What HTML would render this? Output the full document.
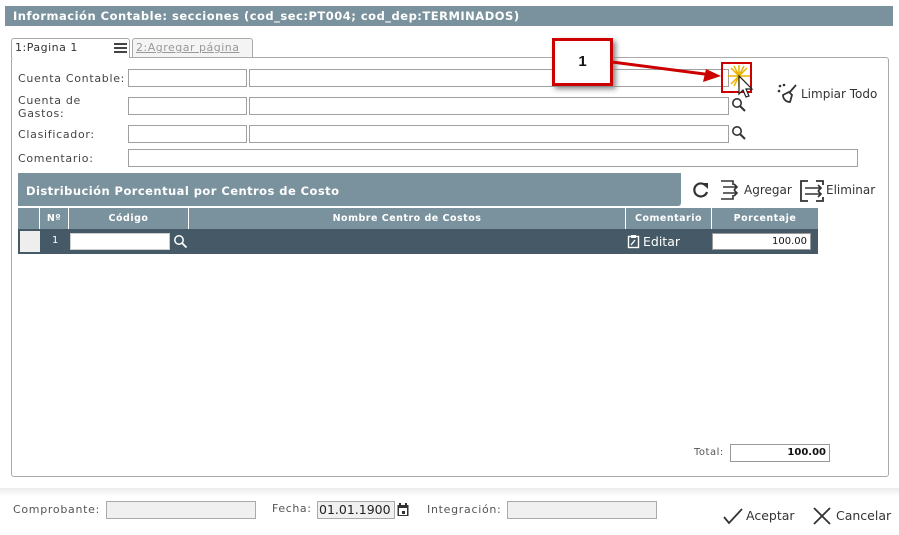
<!DOCTYPE html>
<html><head><meta charset="utf-8"><style>
body{margin:0;width:899px;height:535px;background:#fff;font-family:"Liberation Sans","DejaVu Sans",sans-serif;position:relative;overflow:hidden;color:#333}
.a{position:absolute}
.inp{position:absolute;border:1px solid #a0a0a0;background:#fff;box-sizing:border-box;height:18px}
.lbl{position:absolute;color:#444;font-family:"DejaVu Sans",sans-serif;font-size:11px;letter-spacing:0.7px}
.th{position:absolute;top:208px;height:21px;line-height:21px;background:#7a929d;color:#fff;font-family:"DejaVu Sans",sans-serif;font-weight:bold;font-size:9.5px;letter-spacing:0.5px;text-align:center;border-right:1px solid #fff;box-sizing:border-box}
</style></head><body>
<div class="a" style="left:5px;top:6px;width:888px;height:20px;background:#7a929d;color:#fff;font-family:'DejaVu Sans',sans-serif;font-weight:bold;font-size:11.5px;letter-spacing:0.5px;line-height:21px;padding-left:8px;box-sizing:border-box">Información Contable: secciones (cod_sec:PT004; cod_dep:TERMINADOS)</div>
<div class="a" style="left:11px;top:57px;width:878px;height:420px;border:1px solid #aaa;border-radius:3px;box-sizing:border-box"></div>
<div class="a" style="left:11px;top:38px;width:119px;height:20px;border:1px solid #aaa;border-bottom:none;background:#fff;border-radius:3px 3px 0 0;box-sizing:border-box;font-family:'DejaVu Sans',sans-serif;font-size:11px;letter-spacing:0.5px;line-height:18px;padding-left:3px">1:Pagina 1
<span class="a" style="left:102px;top:4px;width:13px;height:2px;background:#444;box-shadow:0 4px 0 #444,0 8px 0 #444"></span></div>
<div class="a" style="left:132px;top:38px;width:121px;height:19px;border:1px solid #aaa;border-bottom:none;background:#f4f4f4;border-radius:3px 3px 0 0;box-sizing:border-box;font-family:'DejaVu Sans',sans-serif;font-size:11px;letter-spacing:0.5px;line-height:17px;padding-left:3px;color:#999;text-decoration:underline">2:Agregar página</div>

<div class="lbl" style="left:18px;top:72px">Cuenta Contable:</div>
<div class="lbl" style="left:18px;top:94px;line-height:13px">Cuenta de<br>Gastos:</div>
<div class="lbl" style="left:18px;top:128px">Clasificador:</div>
<div class="lbl" style="left:18px;top:152px">Comentario:</div>
<div class="inp" style="left:128px;top:69px;width:119px"></div><div class="inp" style="left:249px;top:69px;width:480px"></div>
<div class="inp" style="left:128px;top:97px;width:119px"></div><div class="inp" style="left:249px;top:97px;width:480px"></div>
<div class="inp" style="left:128px;top:125px;width:119px"></div><div class="inp" style="left:249px;top:125px;width:480px"></div>
<div class="inp" style="left:128px;top:149px;width:730px"></div>
<svg class="a" style="left:731px;top:97px" width="16" height="16"><circle cx="6" cy="6" r="4.2" fill="none" stroke="#333" stroke-width="1.6"/><path d="M9 9l5 5" stroke="#333" stroke-width="2"/></svg>
<svg class="a" style="left:731px;top:125px" width="16" height="16"><circle cx="6" cy="6" r="4.2" fill="none" stroke="#333" stroke-width="1.6"/><path d="M9 9l5 5" stroke="#333" stroke-width="2"/></svg>
<svg class="a" style="left:777px;top:83px" width="22" height="22"><circle cx="3" cy="3" r="1.3" fill="#333"/><circle cx="7" cy="2" r="1.3" fill="#333"/><circle cx="2" cy="8" r="1.3" fill="#333"/><path d="M19 2l-7 8M6 12l6-3 3 3-2 7c-4 0-7-3-7-7z" fill="none" stroke="#333" stroke-width="1.8"/></svg>
<div class="a" style="left:801px;top:87px;font-family:'DejaVu Sans',sans-serif;font-size:12px;color:#333">Limpiar Todo</div>

<div class="a" style="left:552px;top:38px;width:61px;height:48px;border:3px solid #c00;background:#fff;box-sizing:border-box;box-shadow:3px 3px 5px #888;text-align:center;font-weight:bold;font-size:15px;line-height:42px;color:#111">1</div>
<svg class="a" style="left:600px;top:55px" width="130" height="35"><path d="M12 7L112 20" stroke="#c00" stroke-width="3"/><path d="M121 21l-18 6 3-13z" fill="#c00"/></svg>
<div class="a" style="left:721px;top:62px;width:31px;height:31px;border:2px solid #c00;box-sizing:border-box"></div>
<svg class="a" style="left:726px;top:64px" width="34" height="36"><g stroke="#e8b400" stroke-width="1.5"><path d="M2 12h22M13 1v22M5 4l16 16M21 4L5 20M8 2l10 20M18 2L8 22"/></g><path d="M13 12v18l4-4 3 7 3-1-3-7h6z" fill="#fff" stroke="#222" stroke-width="1.2"/></svg>

<div class="a" style="left:18px;top:173px;width:663px;height:33px;background:#7a929d;border-radius:0 0 3px 0;color:#fff;font-family:'DejaVu Sans',sans-serif;font-weight:bold;font-size:11.5px;letter-spacing:0.45px;line-height:36px;padding-left:8px;box-sizing:border-box">Distribución Porcentual por Centros de Costo</div>
<svg class="a" style="left:691px;top:180px" width="20" height="20"><path d="M15 6A6.5 6.5 0 1 0 16 12" fill="none" stroke="#333" stroke-width="2.2"/><path d="M11 3h6v6z" fill="#333"/></svg>
<svg class="a" style="left:718px;top:179px" width="22" height="22"><path d="M3 2h12v4M15 16v4H3" fill="none" stroke="#333" stroke-width="1.6"/><path d="M5 8h14M5 14h14M16 5l3 3-3 3M16 11l3 3-3 3" fill="none" stroke="#333" stroke-width="1.6"/></svg>
<div class="a" style="left:744px;top:183px;font-family:'DejaVu Sans',sans-serif;font-size:12px">Agregar</div>
<svg class="a" style="left:799px;top:179px" width="26" height="24"><path d="M9 2H2v20h7M17 2h7v4M24 18v4h-7" fill="none" stroke="#333" stroke-width="1.8"/><path d="M6 9h16M6 15h16M19 6l3 3-3 3M19 12l3 3-3 3" fill="none" stroke="#333" stroke-width="1.6"/></svg>
<div class="a" style="left:826px;top:183px;font-family:'DejaVu Sans',sans-serif;font-size:12px">Eliminar</div>

<div class="th" style="left:18px;width:22px"></div>
<div class="th" style="left:40px;width:29px">Nº</div>
<div class="th" style="left:69px;width:120px">Código</div>
<div class="th" style="left:189px;width:437px">Nombre Centro de Costos</div>
<div class="th" style="left:626px;width:86px">Comentario</div>
<div class="th" style="left:712px;width:106px;border-right:none">Porcentaje</div>
<div class="a" style="left:18px;top:229px;width:800px;height:25px;background:#455a66"></div>
<div class="a" style="left:20px;top:231px;width:20px;height:21px;background:#eee"></div>
<div class="a" style="left:52px;top:235px;color:#fff;font-family:'DejaVu Sans',sans-serif;font-size:10px">1</div>
<div class="a" style="left:70px;top:233px;width:100px;height:17px;background:#fff;border:1px solid #ccc;box-sizing:border-box"></div>
<svg class="a" style="left:173px;top:234px" width="15" height="15"><circle cx="6" cy="6" r="4.2" fill="none" stroke="#fff" stroke-width="1.5"/><path d="M9 9l4.5 4.5" stroke="#fff" stroke-width="1.8"/></svg>
<svg class="a" style="left:627px;top:234px" width="14" height="15"><rect x="1.5" y="2.5" width="10" height="11" fill="none" stroke="#fff" stroke-width="1.4"/><rect x="4" y="1" width="5" height="3" fill="#fff"/><path d="M4 11l4-5" stroke="#fff" stroke-width="1.4"/></svg>
<div class="a" style="left:643px;top:234px;color:#fff;font-family:'DejaVu Sans',sans-serif;font-size:12.5px">Editar</div>
<div class="a" style="left:712px;top:233px;width:99px;height:17px;background:#fff;border:1px solid #999;box-sizing:border-box;text-align:right;font-family:'DejaVu Sans',sans-serif;font-size:10px;line-height:15px;padding-right:3px;color:#111">100.00</div>

<div class="a" style="left:694px;top:447px;font-family:'DejaVu Sans',sans-serif;font-size:10px;letter-spacing:0.5px;color:#555">Total:</div>
<div class="a" style="left:730px;top:444px;width:100px;height:18px;border:1px solid #999;box-sizing:border-box;text-align:right;font-family:'DejaVu Sans',sans-serif;font-size:10px;font-weight:bold;line-height:16px;padding-right:3px;color:#111">100.00</div>

<div class="a" style="left:0;top:488px;width:899px;height:8px;background:linear-gradient(#ececec,#fff)"></div>
<div class="a" style="left:13px;top:503px;font-family:'DejaVu Sans',sans-serif;font-size:11px;letter-spacing:0.7px;color:#555">Comprobante:</div>
<div class="a" style="left:106px;top:501px;width:150px;height:18px;border:1px solid #aaa;background:#f0f0f0;box-sizing:border-box"></div>
<div class="a" style="left:272px;top:502px;font-family:'DejaVu Sans',sans-serif;font-size:11px;letter-spacing:0.6px;color:#555">Fecha:</div>
<div class="a" style="left:317px;top:501px;width:78px;height:18px;border:1px solid #aaa;background:#f0f0f0;box-sizing:border-box;font-family:'DejaVu Sans',sans-serif;font-size:12.5px;line-height:16px;padding-left:1px;color:#222">01.01.1900</div>
<svg class="a" style="left:397px;top:503px" width="12" height="14"><rect x="0.5" y="2" width="11" height="11" fill="#333"/><rect x="2" y="5" width="8" height="7" fill="#fff"/><rect x="5" y="8" width="3" height="3" fill="#333"/><rect x="2" y="0" width="2" height="3" fill="#333"/><rect x="8" y="0" width="2" height="3" fill="#333"/></svg>
<div class="a" style="left:427px;top:503px;font-family:'DejaVu Sans',sans-serif;font-size:11px;letter-spacing:0.7px;color:#555">Integración:</div>
<div class="a" style="left:507px;top:501px;width:150px;height:18px;border:1px solid #aaa;background:#f0f0f0;box-sizing:border-box"></div>
<svg class="a" style="left:723px;top:508px" width="20" height="17"><path d="M1 9l5 6L19 1" fill="none" stroke="#333" stroke-width="1.8"/></svg>
<div class="a" style="left:746px;top:508px;font-family:'DejaVu Sans',sans-serif;font-size:12.5px;color:#333">Aceptar</div>
<svg class="a" style="left:813px;top:507px" width="18" height="18"><path d="M1 1l16 16M17 1L1 17" stroke="#333" stroke-width="1.8"/></svg>
<div class="a" style="left:836px;top:508px;font-family:'DejaVu Sans',sans-serif;font-size:12.5px;color:#333">Cancelar</div>
</body></html>
